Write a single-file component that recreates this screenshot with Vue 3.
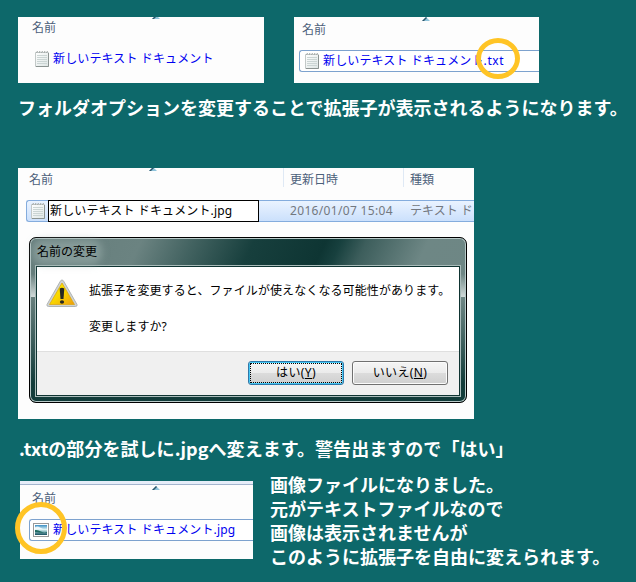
<script setup>
const notes = [
  '画像ファイルになりました。',
  '元がテキストファイルなので',
  '画像は表示されませんが',
  'このように拡張子を自由に変えられます。',
]
const docName = '新しいテキスト ドキュメント'
</script>

<template>
  <svg class="defs" width="0" height="0">
    <defs>
      <linearGradient id="sheet" x1="0" y1="0" x2="1" y2="1">
        <stop offset="0" stop-color="#fff" /><stop offset="1" stop-color="#dde5e4" />
      </linearGradient>
      <linearGradient id="warn" x1="0" y1="0" x2="1" y2="1">
        <stop offset="0" stop-color="#fff000" /><stop offset=".5" stop-color="#f8d500" /><stop offset="1" stop-color="#ee9d0c" />
      </linearGradient>
      <linearGradient id="sky" x1="0" y1="0" x2="0" y2="1">
        <stop offset="0" stop-color="#3b8fc4" /><stop offset=".45" stop-color="#dff4f4" /><stop offset=".6" stop-color="#9cc9cf" /><stop offset="1" stop-color="#124c5c" />
      </linearGradient>
      <symbol id="note" viewBox="0 0 14 17">
        <path d="M.5 2.500H13.500V16.500H.5Z" fill="url(#sheet)" stroke="#c3c9c8" />
        <path d="M13.500 3V16.500H1" fill="none" stroke="#8b9391" />
        <path d="M2 5.500H12M2 7.500H12M2 9.500H12M2 11.500H12M2 13.500H12" stroke="#cbd5d4" />
        <path d="M1.500 3L2.500 1M4 3L5 1M6.500 3L7.500 1M9 3L10 1M11.500 3L12.500 1" stroke="#a0a6a4" />
      </symbol>
      <symbol id="sort" viewBox="0 0 8 4">
        <path d="M4 0L8 4H0Z" fill="#8fc4dc" /><path d="M4 0L0 4H2L5 1Z" fill="#2c5568" />
      </symbol>
    </defs>
  </svg>
  <main class="page">
    <div class="top">
      <section class="panel p1">
        <div class="sort"><svg><use href="#sort" /></svg></div>
        <div class="head">名前</div>
        <div class="file plain"><svg class="note"><use href="#note" /></svg><span>{{ docName }}</span></div>
      </section>
      <section class="panel p2">
        <div class="sort"><svg><use href="#sort" /></svg></div>
        <div class="head">名前</div>
        <div class="file boxed"><svg class="note"><use href="#note" /></svg><span>{{ docName }}<b>.txt</b></span></div>
        <i class="ring"></i>
      </section>
    </div>
    <p class="caption c1">フォルダオプションを変更することで拡張子が表示されるようになります。</p>

    <section class="panel p3">
      <div class="sort"><svg><use href="#sort" /></svg></div>
      <div class="columns"><span>名前</span><span>更新日時</span><span>種類</span></div>
      <div class="selected">
        <svg class="note"><use href="#note" /></svg>
        <div class="edit">{{ docName }}.jpg</div>
        <span class="date">2016/01/07 15:04</span>
        <span class="kind">テキスト ド</span>
      </div>
      <div class="dialog">
        <div class="title"><span>名前の変更</span></div>
        <div class="client">
          <div class="message">
            <svg class="warning" viewBox="0 0 32 29">
              <path d="M16 1Q17.200 1 18 2.800L31 25.500Q31.500 27.500 29.500 27.500H2.500Q.5 27.500 1 25.500L14 2.800Q14.800 1 16 1Z" fill="#d0d3d3" stroke="#b0b5b5" />
              <path d="M16 4L28.500 25.500H3.500Z" fill="url(#warn)" stroke="#dba408" stroke-width=".7" />
              <path d="M13.700 9.500Q16 8 18.300 9.500L17.500 20H14.500Z" fill="#252822" />
              <ellipse cx="16" cy="23" rx="2.100" ry="1.800" fill="#252822" />
            </svg>
            <div class="lines">
              <p>拡張子を変更すると、ファイルが使えなくなる可能性があります。</p>
              <p>変更しますか?</p>
            </div>
          </div>
          <div class="actions">
            <button class="yes">はい(<u>Y</u>)</button>
            <button>いいえ(<u>N</u>)</button>
          </div>
        </div>
      </div>
    </section>

    <p class="caption c2">.txtの部分を試しに.jpgへ変えます。警告出ますので「はい」</p>

    <div class="bottom">
      <section class="panel p4">
        <div class="sort"><svg><use href="#sort" /></svg></div>
        <div class="head">名前</div>
        <div class="file boxed">
          <svg class="picture" viewBox="0 0 16 14">
            <rect x=".5" y=".5" width="15" height="13" fill="#fff" stroke="#999" />
            <rect x="2" y="2" width="12" height="10" fill="url(#sky)" />
            <path d="M2 7Q5 6.500 8 8.500T14 9V10Q8 10 2 9Z" fill="#206a62" />
            <path d="M2 4.500Q4 2.500 7 4.500L10 6H2Z" fill="#fff" opacity=".8" />
          </svg>
          <span>{{ docName }}.jpg</span>
        </div>
        <i class="ring"></i>
      </section>
      <div class="notes"><p v-for="n in notes" :key="n">{{ n }}</p></div>
    </div>
  </main>
</template>

<style>
body { margin: 0; background: #0d686a; }
</style>

<style scoped>
* { box-sizing: border-box; }
p { margin: 0; }
.defs { position: absolute; }
.page {
  width: 636px; height: 582px; padding-top: 17px; overflow: hidden;
  background: #0d686a; color: #fff;
  font-family: "Noto Sans", "Noto Sans CJK JP", sans-serif;
}
.panel { position: relative; background: #fdfdfd; font-size: 12px; line-height: 18px; white-space: nowrap; }
.top { display: flex; gap: 30px; padding-left: 18px; }
.p1 { width: 246px; height: 66px; padding: 2px 0 0 14px; }
.p2 { width: 245px; height: 66px; padding: 4px 0 0 5px; }
.head, .columns { color: #4c607a; }
.p2 .head { padding-left: 3px; }
.file { display: flex; align-items: center; color: #0000f0; letter-spacing: .13px; }
.file b { font-weight: 400; letter-spacing: .6px; }
.plain { margin-top: 11px; padding-left: 3px; gap: 4px; }
.plain span { padding-top: 2px; }
.boxed { height: 22px; border: 1px solid #7da2ce; border-right: 0; border-radius: 3px 0 0 3px; background: #fff; }
.p2 .boxed { margin-top: 11px; padding-left: 5px; gap: 4px; }
.note { width: 14px; height: 17px; flex: none; display: block; }
.boxed .note, .selected .note { margin-top: -2px; }
.sort { position: absolute; top: 0; display: flex; align-items: flex-end; width: 8px; height: 4px; overflow: hidden; }
.sort svg { width: 8px; height: 4px; flex: none; }
.p1 .sort { left: 134px; height: 2px; }
.p2 .sort { left: 128px; }
.p3 .sort { left: 131px; height: 3px; }
.p4 .sort { left: 132px; top: 5px; }
.ring { position: absolute; border: 5px solid #ffc425; border-radius: 50%; }
.p2 .ring { left: 182px; top: 21px; width: 44px; height: 41px; }
.p4 .ring { left: -5px; top: 21px; width: 52px; height: 52px; }

.caption, .notes { font-family: "Noto Sans CJK JP", sans-serif; font-weight: 700; font-size: 18px; line-height: 24px; white-space: nowrap; }
.c1 { margin: 12px 0 0 18px; }
.c2 { margin: 17px 0 0 19px; letter-spacing: .05px; }

.p3 { width: 456px; height: 251px; margin: 49px 0 0 18px; }
.columns { display: grid; grid-template-columns: 265px 120px 1fr; height: 20px; margin-bottom: 12px; }
.columns span { padding: 3px 0 0 6px; border-left: 1px solid #dfe9f5; height: 19px; }
.columns span:first-child { padding-left: 11px; border-left: 0; }
.selected {
  display: flex; align-items: center; height: 22px; margin-left: 8px; padding-left: 4px;
  border: 1px solid #84acdd; border-right: 0; border-radius: 3px 0 0 3px;
  background: linear-gradient(#eaf3ff, #cbe0fc); color: #737880;
}
.kind { width: 64px; overflow: hidden; }
.edit { width: 211px; height: 22px; margin-left: 3px; padding-left: 1px; flex: none; border: 1px solid #000; background: #fff; color: #000; line-height: 20px; letter-spacing: .13px; }
.date { width: 120px; margin-left: 31px; flex: none; letter-spacing: .33px; }
.dialog {
  width: 438px; height: 166px; margin: 15px 0 0 11px; padding: 1px 5px 5px;
  border: 1px solid #000; border-radius: 7px;
  box-shadow: inset 0 0 0 1px #b8c9c8;
  background:
    linear-gradient(transparent 0 30px, #b9c8c700 36px, #d2dbda 59px, transparent 59px) 0 0 / 6px 100% no-repeat,
    linear-gradient(transparent 0 30px, #b9c8c700 36px, #d2dbda 59px, transparent 59px) 100% 0 / 6px 100% no-repeat,
    linear-gradient(#123c3a00 60px, #123c3a 145px),
    linear-gradient(115deg, #657d7b 0, #6b8381 22%, #436361 32%, #173f3d 44%, #0e3533 58%, #17403e 61%, #3d5e5c 66%, #6e8785 78%, #6e8684 100%);
}
.title { height: 26px; padding: 4px 0 0 2px; color: #000; }
.title span { background: #9eb0ae88; box-shadow: 0 0 7px 5px #9eb0ae88; border-radius: 6px; line-height: 16px; display: inline-block; }
.client { height: 132px; border: 1px solid #a9bcba; padding: 1px; background: #0f3432; }
.message { height: 84px; display: flex; padding: 12px 0 0 9px; background: #fff; color: #000; }
.warning { width: 32px; height: 29px; flex: none; }
.lines { display: flex; flex-direction: column; gap: 18px; margin: 3px 0 0 11px; letter-spacing: .1px; }
.actions { display: flex; gap: 8px; height: 44px; padding: 9px 0 0 211px; border-top: 1px solid #dfdfdf; background: #f0f0f0; }
button {
  width: 96px; height: 24px; padding: 0; border: 1px solid #707070; border-radius: 3px;
  box-shadow: inset 0 0 0 1px #fbfbfb; font: inherit; line-height: 20px; color: #000; letter-spacing: .4px;
  background: linear-gradient(#f3f3f3 0 10%, #ebebeb 50%, #dcdcdc 50%, #cfcfcf);
}
.yes { border-color: #3077a8; box-shadow: inset 0 0 0 1px #45c8f5; outline: 1px dotted #000; outline-offset: -3px; }
u { text-underline-offset: 1px; }

.bottom { display: flex; margin-top: 21px; padding-left: 20px; }
.p4 { width: 233px; height: 78px; padding: 9px 0 0 9px; background: linear-gradient(#e6edf9 0 3px, #a3b5ce 3px 4px, #fdfdfd 4px); }
.p4 .head { padding-left: 3px; }
.p4 .boxed { margin-top: 11px; padding-left: 3px; gap: 4px; }
.picture { width: 16px; height: 14px; flex: none; }
.notes { margin: -9px 0 0 17px; }
</style>
